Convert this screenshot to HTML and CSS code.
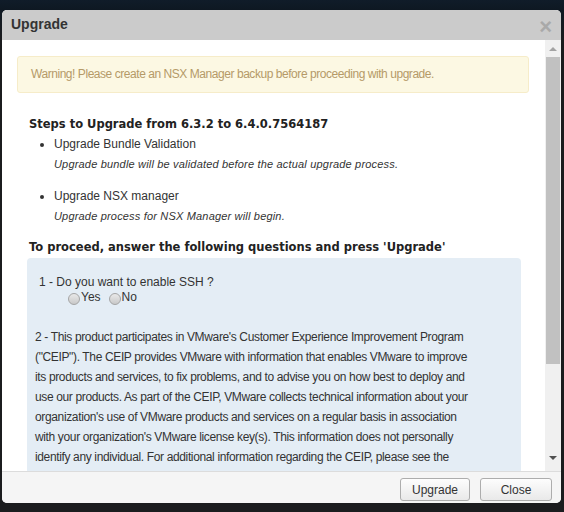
FILE: index.html
```html
<!DOCTYPE html>
<html>
<head>
<meta charset="utf-8">
<link rel="stylesheet" href="styles.css">
</head>
<body>
<div class="dialog">
  <div class="header">
    <span class="title">Upgrade</span>
    <span class="close">&times;</span>
  </div>
  <div class="body">
    <div class="content">
      <div class="warning">Warning! Please create an NSX Manager backup before proceeding with upgrade.</div>
      <h3 class="steps-title">Steps to Upgrade from 6.3.2 to 6.4.0.7564187</h3>
      <ul class="steps">
        <li>
          <div class="step-name">Upgrade Bundle Validation</div>
          <div class="step-desc">Upgrade bundle will be validated before the actual upgrade process.</div>
        </li>
        <li>
          <div class="step-name">Upgrade NSX manager</div>
          <div class="step-desc">Upgrade process for NSX Manager will begin.</div>
        </li>
      </ul>
      <h3 class="proceed">To proceed, answer the following questions and press 'Upgrade'</h3>
      <div class="questions">
        <div class="q1">1 - Do you want to enable SSH ?</div>
        <div class="radios">
          <label class="radio"><span class="dot"></span>Yes</label>
          <label class="radio"><span class="dot"></span>No</label>
        </div>
        <p class="q2">2 - This product participates in VMware's Customer Experience Improvement Program ("CEIP"). The CEIP provides VMware with information that enables VMware to improve its products and services, to fix problems, and to advise you on how best to deploy and use our products. As part of the CEIP, VMware collects technical information about your organization's use of VMware products and services on a regular basis in association with your organization's VMware license key(s). This information does not personally identify any individual. For additional information regarding the CEIP, please see the Trust &amp; Assurance Center.</p>
      </div>
    </div>
    <div class="scrollbar">
      <div class="arrow up"></div>
      <div class="track"><div class="thumb"></div></div>
      <div class="arrow down"></div>
    </div>
  </div>
  <div class="footer">
    <button class="btn btn-upgrade">Upgrade</button>
    <button class="btn btn-close">Close</button>
  </div>
</div>
</body>
</html>
```
FILE: styles.css
```css
* { box-sizing: border-box; }
html, body { margin: 0; padding: 0; }
body {
  width: 564px;
  height: 512px;
  background: linear-gradient(to bottom, #101c29 0, #0e1822 10px, #1b1c1e 40px, #1b1c1e 100%);
  padding: 10px 3px 9px 2px;
  font-family: "Liberation Sans", Arial, sans-serif;
  color: #333;
  overflow: hidden;
}
.dialog {
  width: 559px;
  height: 493px;
  background: #fff;
  border-radius: 5px;
  overflow: hidden;
  display: flex;
  flex-direction: column;
}
.header {
  height: 30px;
  flex: none;
  background: #cbcbcb;
  display: flex;
  align-items: center;
  justify-content: space-between;
  padding: 0 9px 0 9px;
}
.title {
  font-weight: bold;
  font-size: 14px;
  color: #333;
  margin-top: -2px;
}
.close {
  font-size: 22px;
  font-weight: bold;
  color: #a9a9a9;
  line-height: 1;
  margin-top: 4px;
}
.body {
  height: 431px;
  flex: none;
  display: flex;
}
.content {
  flex: 1;
  overflow: hidden;
  padding: 16px 16px 0 15px;
}
.warning {
  height: 37px;
  background: #fcf8e3;
  border: 1px solid #f6ecc9;
  border-radius: 3px;
  color: #b59a68;
  font-size: 12px;
  letter-spacing: -0.45px;
  line-height: 35px;
  padding-left: 13px;
}
.steps-title, .proceed {
  font-size: 11.5px;
  font-weight: bold;
  color: #222;
  line-height: 16px;
  margin: 0 0 0 12px;
  font-family: "DejaVu Sans", Verdana, sans-serif;
}
.steps-title { margin-top: 23px; }
.steps {
  list-style: disc;
  margin: 4px 0 0 0;
  padding-left: 37px;
  font-size: 12px;
}
.steps li { line-height: 16px; }
.steps li + li { margin-top: 16px; }
.step-desc {
  font-style: italic;
  font-size: 11px;
  letter-spacing: 0.18px;
  margin-top: 4px;
}
.proceed { margin-top: 15px; }
.questions {
  margin: 3px 8px 0 10px;
  background: #e4edf5;
  border-radius: 4px 4px 0 0;
  padding: 16px 49px 0 8px;
  font-size: 12px;
  height: 300px;
}
.q1 { line-height: 16px; padding-left: 4px; }
.radios {
  display: flex;
  gap: 8px;
  padding-left: 33px;
  line-height: 16px;
  margin-top: -1px;
}
.radio {
  display: flex;
  align-items: center;
}
.dot {
  width: 12px;
  height: 12px;
  border-radius: 50%;
  border: 1px solid #a5a5a5;
  background: linear-gradient(to bottom, #e9e9e9, #c9c9c9);
  margin: 4px 1px 0 0;
}
.q2 {
  margin: 22px 0 0 0;
  line-height: 20px;
  letter-spacing: -0.36px;
}
.scrollbar {
  width: 16px;
  flex: none;
  background: #f0f0f0;
  display: flex;
  flex-direction: column;
  align-items: center;
}
.arrow {
  height: 17px;
  width: 16px;
  display: flex;
  align-items: center;
  justify-content: center;
}
.arrow.up::before {
  content: "";
  border-left: 4px solid transparent;
  border-right: 4px solid transparent;
  border-bottom: 4px solid #a3a3a3;
}
.arrow.down { margin-top: auto; height: 22px; padding-bottom: 4px; }
.arrow.down::before {
  content: "";
  border-left: 4px solid transparent;
  border-right: 4px solid transparent;
  border-top: 4px solid #505050;
}
.track {
  width: 100%;
  flex: 1;
  padding: 0 1px;
}
.thumb {
  height: 307px;
  background: #c1c1c1;
}
.footer {
  flex: 1;
  background: #f5f5f5;
  border-top: 1px solid #dcdcdc;
  display: flex;
  justify-content: flex-end;
  align-items: flex-start;
  gap: 10px;
  padding: 6px 9px 0 0;
}
.btn {
  height: 23px;
  border: 1px solid #adadad;
  border-radius: 3px;
  background: linear-gradient(to bottom, #fdfdfd, #e9e9e9);
  font-family: "Liberation Sans", Arial, sans-serif;
  font-size: 12px;
  color: #333;
  padding: 0;
}
.btn-upgrade { width: 70px; }
.btn-close { width: 72px; }
```
